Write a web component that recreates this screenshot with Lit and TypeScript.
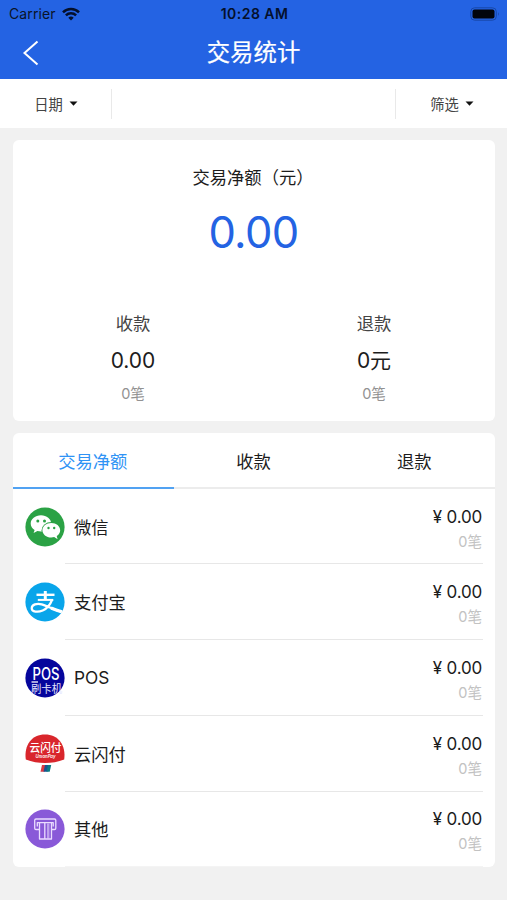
import { LitElement, html, css, svg } from "lit";
import { customElement, state } from "lit/decorators.js";

const wechat = svg`
  <circle cx="20" cy="20" r="19.6" fill="#2ba245"/>
  <path fill="#fff" d="M16 8.2c-5.8 0-10.3 3.7-10.3 8.3 0 2.7 1.5 4.9 3.9 6.4l-1 3.2 3.8-2c1.2.3 2.4.5 3.6.5 5.7 0 10.2-3.6 10.2-8.1S21.7 8.2 16 8.2z"/>
  <ellipse cx="26.3" cy="23.4" rx="9.8" ry="8.4" fill="#2ba245"/>
  <path fill="#fff" d="M26.3 15.9c-5 0-8.9 3.2-8.9 7.3s3.9 7.3 8.9 7.3c1 0 2-.1 2.9-.4l3.400 2.200-.9-3.200c2.100-1.400 3.500-3.400 3.500-5.900 0-4.100-3.900-7.300-8.900-7.300z"/>
  <g fill="#2ba245"><circle cx="12.800" cy="14" r="1.500"/><circle cx="19.500" cy="14" r="1.500"/><circle cx="23.500" cy="21" r="1.200"/><circle cx="29.200" cy="21" r="1.200"/></g>`;

const alipay = svg`
  <circle cx="20" cy="20" r="19.6" fill="#09a5ea"/>
  <g fill="none" stroke="#fff">
    <path stroke-width="2.4" d="M11.500 12.800h18"/>
    <path stroke-width="3" d="M20.300 9v8.500"/>
    <path stroke-width="2" d="M12.800 17.900h15.500"/>
    <path stroke-width="2.200" d="M27.200 17.500c-1.800 4.800-5 9-9.500 11-4.800 2.100-11 1.500-11-2.300 0-3.700 5.300-5.200 10-3.800 5 1.500 10.500 4.300 19.500 7.600"/>
    <path stroke-width="3.200" d="M26 26c3.500 1.500 7 2.700 11 3.800"/>
  </g>`;

const pos = svg`
  <circle cx="20" cy="20" r="19.6" fill="#05059c"/>
  <text x="21" y="21.600" text-anchor="middle" fill="#fff" font-size="17" font-weight="500" textLength="27" lengthAdjust="spacingAndGlyphs">POS</text>
  <path d="M6.500 24h6.500" stroke="#fff" stroke-width="1.3"/>
  <text x="21.500" y="35" text-anchor="middle" fill="#e4e6ff" font-size="11.500" textLength="31" lengthAdjust="spacingAndGlyphs">刷卡机</text>`;

const quickpass = svg`
  <path fill="#d9262c" d="M.8 25.500C-1.200 11 7 .6 20 .6S41.200 11 39.200 25.500Q30 29 20 29T.8 25.500z"/>
  <text x="20.500" y="17.600" text-anchor="middle" fill="#fff" font-size="11.500" font-weight="500" textLength="32" lengthAdjust="spacingAndGlyphs">云闪付</text>
  <text x="20.500" y="24.200" text-anchor="middle" fill="#fff" font-size="5" font-weight="600" font-style="italic" textLength="20" lengthAdjust="spacingAndGlyphs">UnionPay</text>
  <path fill="#d83a43" d="M17 31h4l-1.500 6.800h-4z"/>
  <path fill="#17538f" d="M20 31h4l-1.500 6.800h-4z"/>
  <path fill="#087b83" d="M23 31h3.200l-1.500 6.800h-3.200z"/>`;

const other = svg`
  <circle cx="20" cy="20" r="19.6" fill="#8959d8"/>
  <g fill="none" stroke="#eadcff" stroke-width="1.3" stroke-linejoin="round">
    <path d="M14.500 20.500H11q-1.300 0-1.300-1.300v-7.900Q9.700 10 11 10h18.500q1.300 0 1.300 1.300v7.900q0 1.300-1.300 1.300H26.500"/>
    <path d="M12.300 17.500v-3.800h15.900v3.800"/>
    <path d="M14.500 13.700v16.300h12V13.700M19.800 13.700v16.300"/>
    <path d="M23.200 14.500v15" stroke-width="2.400" stroke-opacity=".55"/>
  </g>`;

interface Channel {
  name: string;
  icon: unknown;
}

const channels: Channel[] = [
  { name: "微信", icon: wechat },
  { name: "支付宝", icon: alipay },
  { name: "POS", icon: pos },
  { name: "云闪付", icon: quickpass },
  { name: "其他", icon: other },
];

const tabs = ["交易净额", "收款", "退款"];

@customElement("app-root")
export class AppRoot extends LitElement {
  @state() private active = 0;

  static styles = css`
    :host {
      display: block;
      height: 900px;
      overflow: hidden;
      background: #f1f1f1;
      color: #1c1c1c;
      font-family: Inter, "Noto Sans CJK SC", sans-serif;
      font-size: 17.3px;
    }
    * { box-sizing: border-box; }
    svg { display: block; flex: none; overflow: visible; }
    .top { height: 79px; background: #2463e3; }
    .status {
      height: 26px;
      display: grid;
      grid-template-columns: 1fr auto 1fr;
      align-items: center;
      padding: 1px 7px 0 9px;
      color: #0a1428;
      font-size: 14px;
    }
    .carrier { display: flex; align-items: center; gap: 6px; letter-spacing: 0.1px; }
    .time { font-weight: 600; letter-spacing: 0.45px; color: #04102c; }
    .battery { justify-self: end; }
    .nav {
      height: 52px;
      display: grid;
      grid-template-columns: 60px 1fr 60px;
      align-items: center;
    }
    .back { margin-left: 22px; }
    .title {
      text-align: center;
      color: #fff;
      font-size: 23.4px;
      font-weight: 400;
      -webkit-text-stroke: 0.2px #fff;
      line-height: 52px;
      padding-top: 1px;
    }
    .filters {
      height: 49px;
      background: #fff;
      display: flex;
      justify-content: space-between;
      align-items: center;
    }
    .filter {
      width: 112px;
      height: 30px;
      display: flex;
      align-items: center;
      justify-content: center;
      gap: 6px;
      padding-left: 1px;
      font-size: 14.3px;
      color: #444;
      border: 0 solid #e9e9e9;
    }
    .filter.start { border-right-width: 1px; }
    .filter.end { border-left-width: 1px; }
    .card { margin: 12px 12px 0 13px; background: #fff; border-radius: 6px; }
    .summary { height: 281px; padding-top: 25px; text-align: center; }
    .label { line-height: 26px; padding-right: 2px; }
    .total { font-size: 43.5px; line-height: 52px; margin-top: 15px; color: #2463e3; letter-spacing: -0.6px; padding-right: 1px; }
    .split { display: grid; grid-template-columns: 1fr 1fr; margin-top: 53px; }
    .kind { line-height: 26px; color: #444; }
    .amount { font-size: 21px; line-height: 30px; margin-top: 9px; }
    .count { font-size: 14.5px; line-height: 22px; margin-top: 7px; color: #929292; }
    .split > div { padding-right: 1px; }
    .tabs { display: grid; grid-template-columns: repeat(3, 1fr); height: 56px; }
    .tab {
      display: flex;
      align-items: center;
      justify-content: center;
      border-bottom: 2px solid #ececec;
      padding-right: 1px;
      cursor: pointer;
    }
    .tab.on { color: #2f93f5; border-color: #51a2f2; }
    .list { height: 378px; display: grid; grid-template-rows: 75px 76px 75.7px 76px 75.3px; }
    .row { display: grid; grid-template-columns: 40px 1fr; padding: 0 12px; }
    .icon { align-self: center; }
    .body {
      display: flex;
      align-items: center;
      justify-content: space-between;
      padding: 0 1px 0 9px;
      border-bottom: 1px solid #e7e7e7;
    }
    .row:last-child .body { border-bottom-color: #f4f4f4; }
    .figures { text-align: right; padding-top: 5px; }
    .money { font-size: 17px; line-height: 24px; letter-spacing: -0.2px; }
    .times { font-size: 14.5px; line-height: 22px; margin-top: 2px; color: #c2c2c2; }
  `;

  render() {
    const caret = html`<svg width="9" height="5" viewBox="0 0 9 5"><path d="M.5 .5h8L4.5 4.8z" fill="#111"/></svg>`;
    return html`
      <header class="top">
        <div class="status">
          <span class="carrier">Carrier
            <svg width="18" height="14" viewBox="0 0 18 14" fill="none" stroke="#04102c" stroke-width="2.5">
              <path d="M1 5.300a11.300 11.300 0 0 1 16 0M3.900 8.300a7.200 7.200 0 0 1 10.200 0"/>
              <path d="M9 13.500 6.300 10.700a3.900 3.900 0 0 1 5.400 0z" fill="#04102c" stroke="none"/>
            </svg>
          </span>
          <span class="time">10:28 AM</span>
          <svg class="battery" width="30" height="14" viewBox="0 0 30 14">
            <rect x=".8" y=".8" width="25.500" height="12.400" rx="3.800" fill="none" stroke="#1848a8"/>
            <rect x="2.500" y="2.500" width="22" height="9" rx="2" fill="#02050c"/>
            <path d="M28 5q1.800 2 0 4z" fill="#1848a8"/>
          </svg>
        </div>
        <nav class="nav">
          <svg class="back" width="18" height="26" viewBox="0 0 18 26"><path d="M15.500 1.500 2.500 13l13 11.500" fill="none" stroke="#fff" stroke-width="2"/></svg>
          <div class="title">交易统计</div>
        </nav>
      </header>
      <div class="filters">
        <div class="filter start">日期 ${caret}</div>
        <div class="filter end">筛选 ${caret}</div>
      </div>
      <section class="card summary">
        <div class="label">交易净额（元）</div>
        <div class="total">0.00</div>
        <div class="split">
          <div>
            <div class="kind">收款</div>
            <div class="amount">0.00</div>
            <div class="count">0笔</div>
          </div>
          <div>
            <div class="kind">退款</div>
            <div class="amount">0元</div>
            <div class="count">0笔</div>
          </div>
        </div>
      </section>
      <section class="card">
        <div class="tabs">
          ${tabs.map((t, i) => html`<div class="tab ${i === this.active ? "on" : ""}" @click=${() => (this.active = i)}>${t}</div>`)}
        </div>
        <div class="list">
          ${channels.map((c) => html`
            <div class="row">
              <svg class="icon" width="40" height="40" viewBox="0 0 40 40">${c.icon}</svg>
              <div class="body">
                <span>${c.name}</span>
                <div class="figures">
                  <div class="money">¥ 0.00</div>
                  <div class="times">0笔</div>
                </div>
              </div>
            </div>`)}
        </div>
      </section>
    `;
  }
}
